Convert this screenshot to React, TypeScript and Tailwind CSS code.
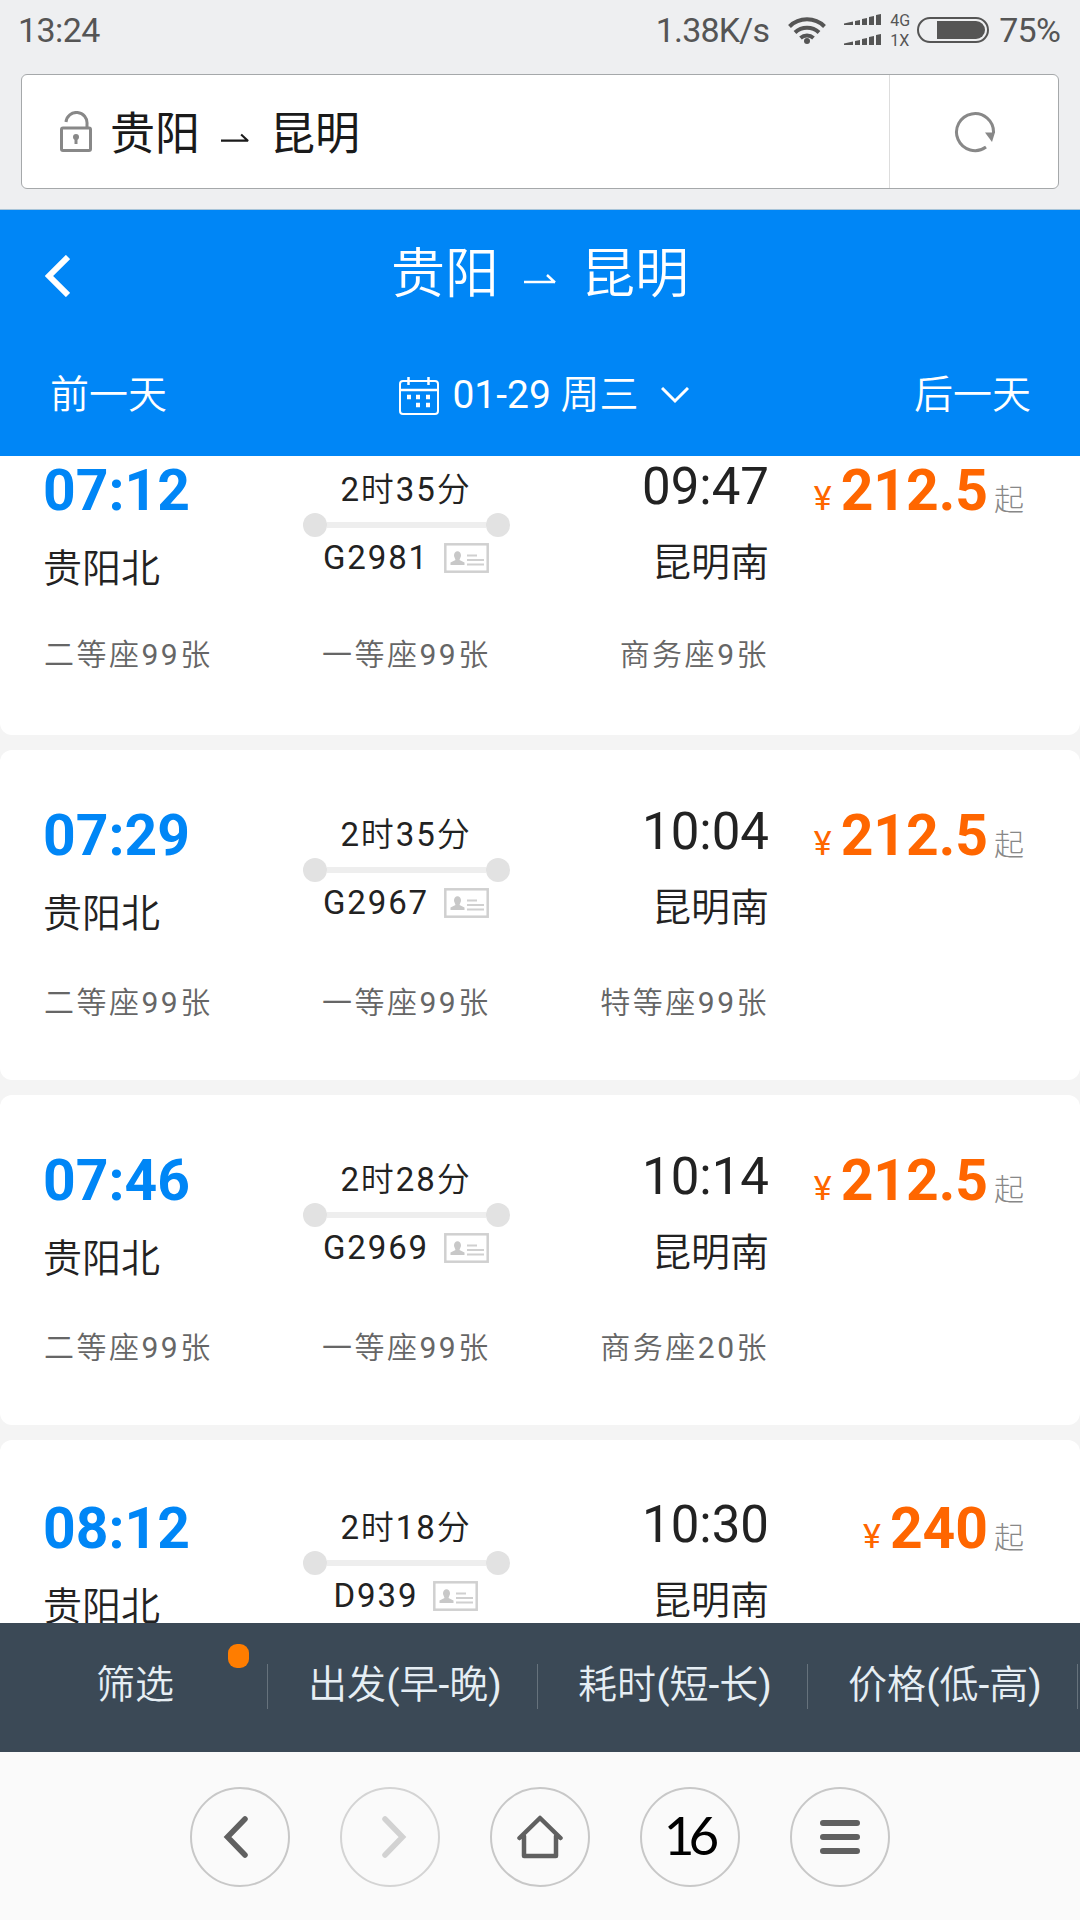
type Train = {
  depart: string;
  arrive: string;
  duration: string;
  code: string;
  price: string;
  seats: string[];
  top: string;
  seatGap: string;
};

const trains: Train[] = [
  {
    depart: "07:12",
    arrive: "09:47",
    duration: "2时35分",
    code: "G2981",
    price: "212.5",
    seats: ["二等座99张", "一等座99张", "商务座9张"],
    top: "pt-[51px]",
    seatGap: "mt-[49px]",
  },
  {
    depart: "07:29",
    arrive: "10:04",
    duration: "2时35分",
    code: "G2967",
    price: "212.5",
    seats: ["二等座99张", "一等座99张", "特等座99张"],
    top: "pt-[51px]",
    seatGap: "mt-[52px]",
  },
  {
    depart: "07:46",
    arrive: "10:14",
    duration: "2时28分",
    code: "G2969",
    price: "212.5",
    seats: ["二等座99张", "一等座99张", "商务座20张"],
    top: "pt-[51px]",
    seatGap: "mt-[52px]",
  },
  {
    depart: "08:12",
    arrive: "10:30",
    duration: "2时18分",
    code: "D939",
    price: "240",
    seats: [],
    top: "pt-[54px]",
    seatGap: "mt-[49px]",
  },
];

const seatCols = ["w-[259px] pl-px", "w-[207px] pl-5 whitespace-nowrap", "w-[260px] text-right whitespace-nowrap"];

const sorts = ["筛选", "出发(早-晚)", "耗时(短-长)", "价格(低-高)"];

// Chinese glyphs take the thinner cut, digits and brackets stay regular
function Mixed({ text }: { text: string }) {
  return (
    <>
      {text.split(/([0-9()-]+)/).map((part, i) => (
        <span key={i} className={i % 2 ? "font-normal" : "font-[350]"}>
          {part}
        </span>
      ))}
    </>
  );
}

function Harpoon({ className }: { className: string }) {
  return (
    <svg viewBox="0 0 32 12" className={className} fill="none" stroke="currentColor" strokeWidth="2.4">
      <path d="M0 9h31M31 9.500 23 2" />
    </svg>
  );
}

function Signal() {
  return (
    <svg viewBox="0 0 38 12" className="w-[38px] h-3" fill="#555">
      <path d="M0 9.500 9 7.500V11H0zM11 7l5-1v5h-5zM18 5l5-1v7h-5zM25 3l5-1v9h-5zM32 1l5-1v11h-5z" />
    </svg>
  );
}

function StatusBar() {
  return (
    <div className="h-[60px] flex items-center text-[34px] text-[#555] leading-none">
      <span className="ml-[18px] tracking-[-0.6px]">13:24</span>
      <span className="ml-auto tracking-[-0.8px]">1.38K/s</span>
      <svg viewBox="0 0 38 28" className="ml-[19px] w-[38px] h-7" fill="none" stroke="#555" strokeWidth="4">
        <path d="M1.500 10.500a25 25 0 0 1 35 0M7 16.500a17.500 17.500 0 0 1 24 0M12.500 22a10 10 0 0 1 13 0" />
        <circle cx="19" cy="25" r="3" fill="#555" stroke="none" />
      </svg>
      <div className="ml-[18px] flex flex-col gap-2">
        <Signal />
        <Signal />
      </div>
      <div className="ml-2 mt-[2px] w-[22px] flex flex-col gap-1 text-base leading-4">
        <span>4G</span>
        <span>1X</span>
      </div>
      <div className="ml-[5px] w-[72px] h-[26px] rounded-full border-2 border-[#555] p-[2px] flex justify-end">
        <div className="w-12 rounded-r-full bg-[#555]" />
      </div>
      <span className="ml-[10px] mr-[20px] tracking-[-0.8px]">75%</span>
    </div>
  );
}

function AddressBar() {
  return (
    <div className="mt-[14px] mx-[21px] h-[115px] rounded-md border-[1.500px] border-[#a5a8aa] bg-white flex items-center">
      <svg viewBox="0 0 32 41" className="ml-[38px] w-8 h-[41px]" fill="none" stroke="#888" strokeWidth="3">
        <rect x="1.500" y="17" width="29" height="22.500" rx="1.500" />
        <path d="M6 11a10.500 10.500 0 0 1 21 2v4" />
        <circle cx="16" cy="26" r="3" fill="#888" stroke="none" />
        <path d="M16 26v7" />
      </svg>
      <span className="ml-[18px] mt-[5px] text-[45px] leading-none text-[#1a1a1a] flex items-center">
        贵阳
        <Harpoon className="ml-[21px] mr-[21px] mt-2 w-7 h-3" />
        昆明
      </span>
      <div className="ml-auto w-[169px] h-full border-l border-[#ddd] flex items-center justify-center">
        <svg viewBox="0 0 42 42" className="ml-[2px] w-[42px] h-[42px]" fill="none" stroke="#888" strokeWidth="3">
          <path d="M39.500 22A18.500 18.500 0 1 0 32 36" />
          <path d="M31 21.500h10l-3 9.500z" fill="#888" stroke="none" />
        </svg>
      </div>
    </div>
  );
}

function PageHeader() {
  return (
    <header className="h-[246px] bg-[#0086f6] text-white">
      <div className="h-[126px] flex items-center pl-[45px]">
        <svg viewBox="0 0 25 42" className="w-[25px] h-[42px] mt-[6px]" fill="none" stroke="#fff" strokeWidth="6">
          <path d="M23 2 4 21l19 19" />
        </svg>
        <h1 className="ml-[321px] mt-1 text-[54px] font-[350] leading-none flex items-center">
          贵阳
          <Harpoon className="ml-[25px] mr-[25px] mt-2 w-8 h-3" />
          昆明
        </h1>
      </div>
      <div className="h-[118px] flex items-center justify-between pl-[50px] pr-[49px] text-[39px] leading-none">
        <span className="font-[350]">前一天</span>
        <div className="ml-[7px] flex items-center">
          <svg viewBox="0 0 40 38" className="w-10 h-[38px] mt-[2px]" fill="none" stroke="#fff" strokeWidth="2">
            <rect x="1" y="4" width="38" height="33" rx="3" />
            <path d="M1 13h38M9.500 0v8M29.500 0v8" strokeWidth="2.500" />
            <path d="M8 20h4M17 20h4M27 20h4M17 28h4M27 28h4" strokeWidth="4.500" />
          </svg>
          <span className="ml-[13px]">
            01-29 <span className="font-[350]">周三</span>
          </span>
          <svg viewBox="0 0 28 17" className="ml-[22px] w-7 h-[17px]" fill="none" stroke="#fff" strokeWidth="3">
            <path d="m1 1 13 13L27 1" />
          </svg>
        </div>
        <span className="font-[350]">后一天</span>
      </div>
    </header>
  );
}

function IdCard() {
  return (
    <svg viewBox="0 0 45 30" className="w-[45px] h-[30px]" fill="none" stroke="#d0d0d0" strokeWidth="2.500">
      <rect x="1.300" y="1.300" width="42.400" height="27.400" />
      <path d="M23 12.500h10M23 17h17M23 21.500h17" strokeWidth="2" />
      <path d="M6.500 22v-2.500l5-2.500-1.500-4c-.5-6.500 7.500-6.500 7 0l-1.500 4 5 2.500V22z" fill="#c8c8c8" stroke="none" />
    </svg>
  );
}

function TrainCard({ train }: { train: Train }) {
  return (
    <div className={`h-[330px] shrink-0 rounded-xl bg-white pl-[43px] pr-[56px] text-[#222] ${train.top}`}>
      <div className="flex h-[132px]">
        <div className="w-[260px]">
          <div className="mt-[2px] text-[57px] leading-[66px] font-bold text-[#0086f6]">{train.depart}</div>
          <div className="mt-[25px] text-[39px] leading-[40px] font-[350]">贵阳北</div>
        </div>
        <div className="w-[207px] flex flex-col items-center">
          <div className="mt-4 pr-px text-[33px] leading-[36px] tracking-[1.900px]">
            <Mixed text={train.duration} />
          </div>
          <div className="mt-[5px] w-full h-6 flex items-center">
            <i className="w-6 h-6 rounded-full bg-[#e2e2e2]" />
            <i className="flex-1 h-[6px] bg-[#eee]" />
            <i className="w-6 h-6 rounded-full bg-[#e2e2e2]" />
          </div>
          <div className="mt-[3px] pr-px flex items-center gap-[15px] text-[33px] leading-[36px] tracking-[1.900px]">
            {train.code}
            <IdCard />
          </div>
        </div>
        <div className="w-[259px] text-right">
          <div className="mt-px text-[51px] leading-[60px]">{train.arrive}</div>
          <div className="mt-[26px] text-[39px] leading-[40px] font-[350]">昆明南</div>
        </div>
        <div className="flex-1 mt-[2px] flex items-baseline justify-end h-[66px] leading-[66px] text-[#ff6600]">
          <span className="text-[34px]">¥</span>
          <span className="ml-[9px] text-[57px] font-bold">{train.price}</span>
          <span className="ml-[6px] text-[30px] font-light text-[#888]">起</span>
        </div>
      </div>
      <div className={`flex text-[30px] leading-[36px] tracking-[2.500px] text-[#666] ${train.seatGap}`}>
        {train.seats.map((seat, i) => (
          <span key={seat} className={seatCols[i]}>
            <Mixed text={seat} />
          </span>
        ))}
      </div>
    </div>
  );
}

function SortBar() {
  return (
    <div className="h-[129px] shrink-0 bg-[#3b4956] flex text-[39px] text-[#e6eef4]">
      {sorts.map((label, i) => (
        <div key={label} className="relative w-[270px] h-[126px] flex items-center pr-[2px]">
          <span className="flex-1 pl-[3px] pb-[2px] text-center leading-none whitespace-nowrap">
            <Mixed text={label} />
          </span>
          <i className="w-px h-[45px] bg-[#66727c]" />
          {i === 0 && <i className="absolute left-[228px] top-[21px] w-[21px] h-6 rounded-[9px] bg-[#ff7d00]" />}
        </div>
      ))}
    </div>
  );
}

function BrowserNav() {
  const button = "w-[100px] h-[100px] rounded-full border-2 border-[#c8c8c8] flex items-center justify-center";
  return (
    <nav className="h-[168px] shrink-0 bg-[#fafafa] flex items-center justify-center gap-[50px] pt-[2px] text-[#606060]">
      <div className={button}>
        <svg viewBox="0 0 26 42" className="w-[26px] h-[42px] mr-2" fill="none" stroke="currentColor" strokeWidth="5.500" strokeLinecap="round">
          <path d="M22 3 4.500 21 22 39" />
        </svg>
      </div>
      <div className="w-[100px] h-[100px] rounded-full border-2 border-[#d4d4d4] flex items-center justify-center text-[#d2d2d2]">
        <svg viewBox="0 0 26 42" className="w-[26px] h-[42px] ml-2" fill="none" stroke="currentColor" strokeWidth="5.500" strokeLinecap="round">
          <path d="m4 3 17.500 18L4 39" />
        </svg>
      </div>
      <div className={button}>
        <svg viewBox="0 0 46 46" className="w-[46px] h-[46px]" fill="none" stroke="currentColor" strokeWidth="4.500" strokeLinecap="round" strokeLinejoin="round">
          <path d="M2.500 24 23 4l20.500 20M7 22v20h32V22" />
        </svg>
      </div>
      <div className={button}>
        <span className="pr-[3px] pb-[5px] font-[Lato] text-[53px] leading-none tracking-[-6px] text-black">16</span>
      </div>
      <div className={button}>
        <svg viewBox="0 0 40 36" className="w-10 h-9" stroke="currentColor" strokeWidth="6" strokeLinecap="round">
          <path d="M3 4h34M3 18h34M3 32h34" />
        </svg>
      </div>
    </nav>
  );
}

export default function App() {
  return (
    <div className="w-[1080px] h-[1920px] overflow-hidden flex flex-col bg-[#f4f4f4] font-[Roboto,'Noto_Sans_CJK_SC',sans-serif]">
      <div className="h-[210px] shrink-0 bg-[#eeeff1] border-b border-[#a8c4d8]">
        <StatusBar />
        <AddressBar />
      </div>
      <PageHeader />
      <main className="flex-1 min-h-0 overflow-hidden">
        <div className="-mt-[51px] flex flex-col gap-[15px]">
          {trains.map((t) => (
            <TrainCard key={t.code} train={t} />
          ))}
        </div>
      </main>
      <SortBar />
      <BrowserNav />
    </div>
  );
}
